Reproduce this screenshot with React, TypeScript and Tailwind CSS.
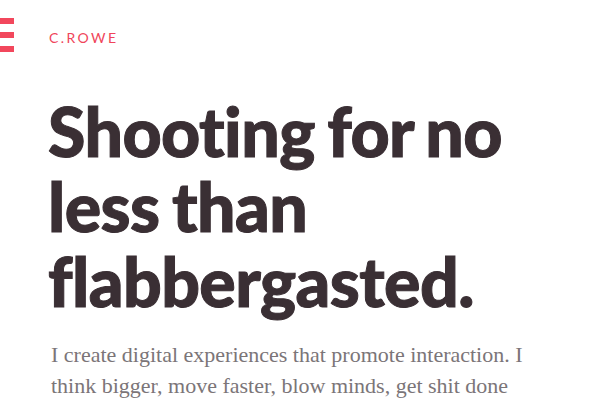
export default function App() {
  return (
    <div className="w-[600px] h-[407px] overflow-hidden bg-white relative">
      <div className="flex items-start">
        <div className="flex flex-col gap-[7.5px] pt-[17.5px] w-[14px]">
          <div className="h-[6.5px] w-[14px] bg-[#f2475c]" />
          <div className="h-[6.5px] w-[14px] bg-[#f2475c]" />
          <div className="h-[6.5px] w-[14px] bg-[#f2475c]" />
        </div>
        <div
          className="ml-[35px] mt-[30px] text-[14px] leading-[16px] tracking-[2.4px] text-[#f0455a]"
          style={{ fontFamily: "Lato, sans-serif" }}
        >
          C.ROWE
        </div>
      </div>
      <h1
        className="ml-[48px] mt-[41px] text-[68px] leading-[75px] font-black text-[#3a2f34] tracking-[-0.6px] [word-spacing:-3px] [-webkit-text-stroke:1px_#3a2f34]"
        style={{ fontFamily: "Lato, sans-serif" }}
      >
        Shooting for no
        <br />
        less than
        <br />
        flabbergasted.
      </h1>
      <p
        className="ml-[51px] mt-[21px] text-[22px] leading-[31px] text-[#7b7578]"
        style={{ fontFamily: '"Liberation Serif", serif' }}
      >
        I create digital experiences that promote interaction. I
        <br />
        think bigger, move faster, blow minds, get shit done
      </p>
    </div>
  );
}
